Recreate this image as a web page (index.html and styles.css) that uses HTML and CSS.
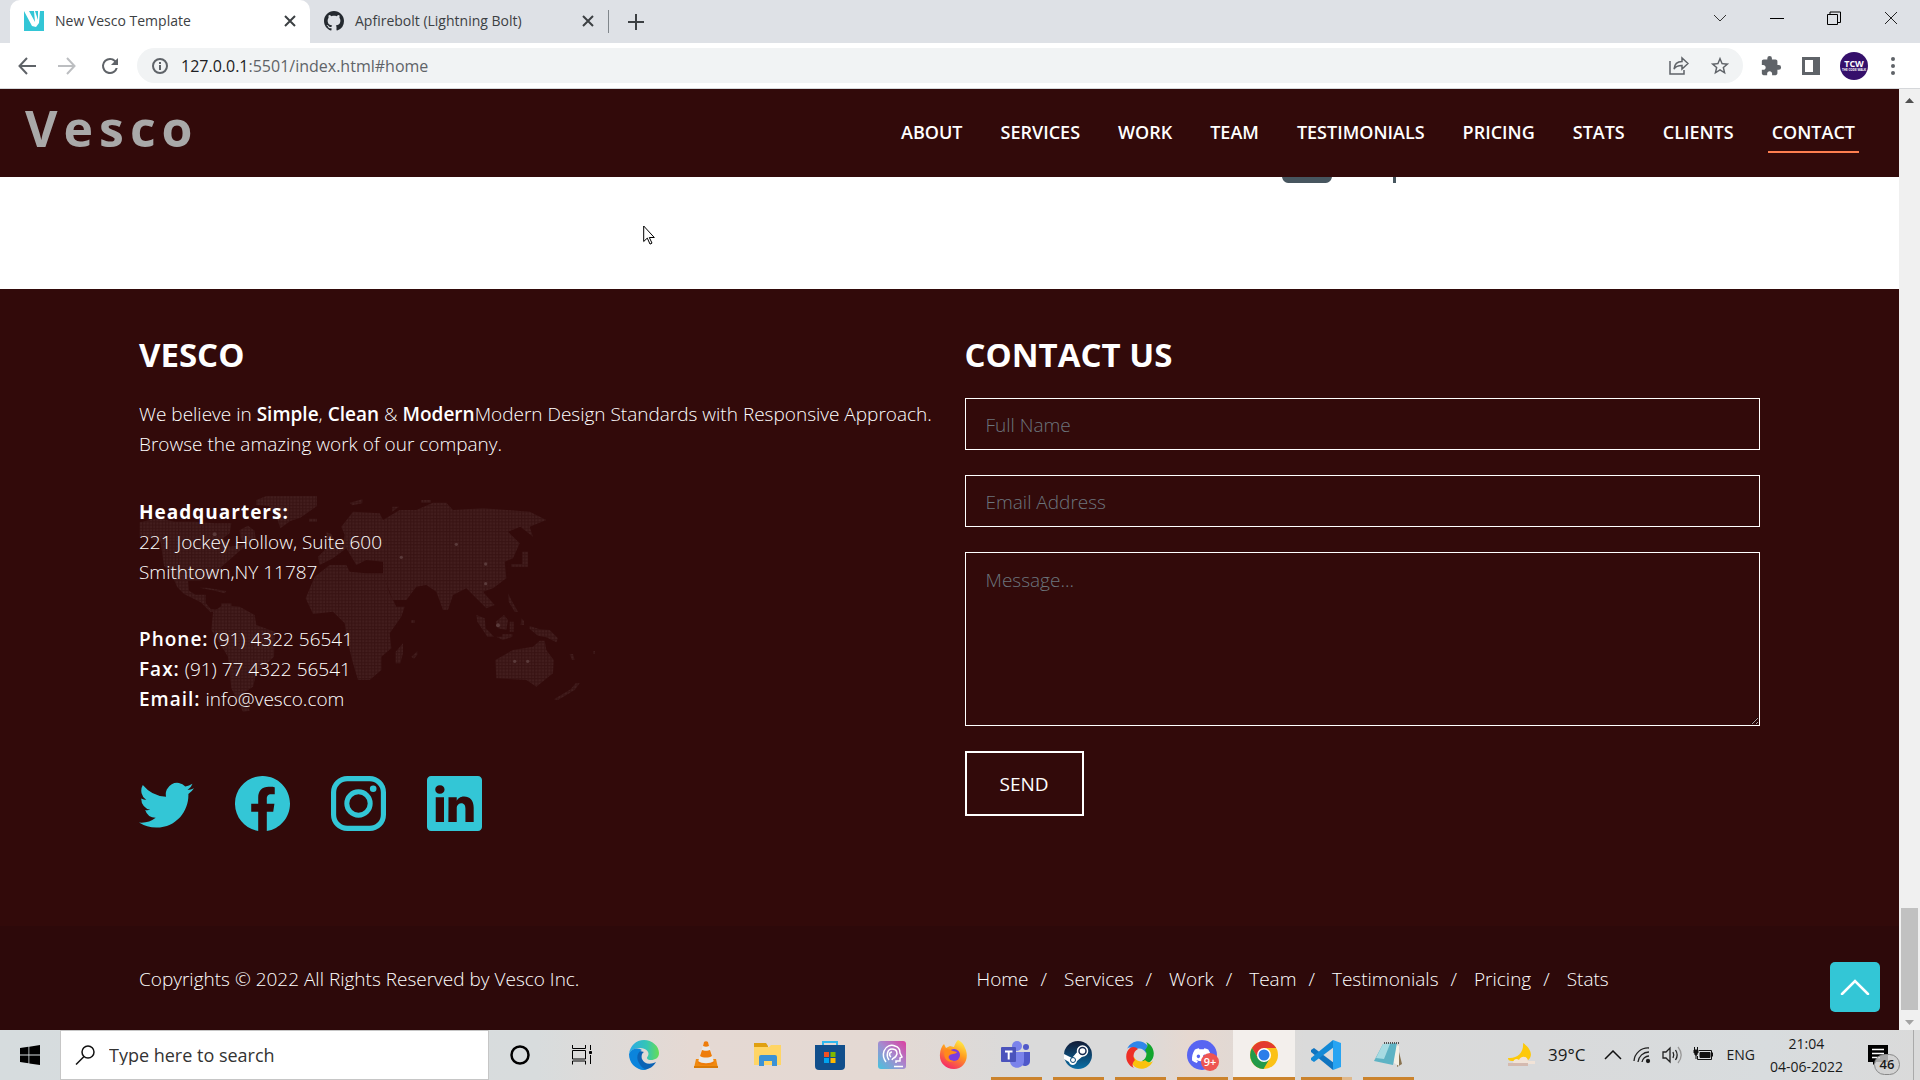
FILE: index.html
```html
<!DOCTYPE html>
<html lang="en">
<head>
<meta charset="utf-8">
<title>New Vesco Template</title>
<link rel="stylesheet" href="styles.css">
</head>
<body>
<div class="tabstrip">
  <div class="tab tab-active">
    <svg class="favicon" viewBox="0 0 20 20"><path fill="#33c6d6" d="M0 0h20v20H0z"/><path fill="#fff" d="M0 0h5l6 11L10 0h1l4 12-3 4-4-1zM14 0h2l-1 12-1 1z"/></svg>
    <span class="tab-title">New Vesco Template</span>
    <button class="icon-btn" aria-label="Close tab"><svg width="12" height="12" viewBox="0 0 12 12"><path d="M1 1l10 10M11 1L1 11" stroke="#3c4043" stroke-width="2"/></svg></button>
  </div>
  <div class="tab">
    <svg class="favicon" viewBox="0 0 16 16"><path fill="#24292f" d="M8 0C3.58 0 0 3.58 0 8c0 3.54 2.29 6.53 5.47 7.59.4.07.55-.17.55-.38 0-.19-.01-.82-.01-1.49-2.01.37-2.53-.49-2.69-.94-.09-.23-.48-.94-.82-1.13-.28-.15-.68-.52-.01-.53.63-.01 1.08.58 1.23.82.72 1.21 1.87.87 2.33.66.07-.52.28-.87.51-1.07-1.78-.2-3.64-.89-3.64-3.95 0-.87.31-1.59.82-2.15-.08-.2-.36-1.02.08-2.12 0 0 .67-.21 2.2.82.64-.18 1.32-.27 2-.27s1.36.09 2 .27c1.53-1.04 2.2-.82 2.2-.82.44 1.1.16 1.92.08 2.12.51.56.82 1.27.82 2.15 0 3.07-1.87 3.75-3.65 3.95.29.25.54.73.54 1.48 0 1.07-.01 1.93-.01 2.2 0 .21.15.46.55.38A8.01 8.01 0 0016 8c0-4.42-3.58-8-8-8z"/></svg>
    <span class="tab-title">Apfirebolt (Lightning Bolt)</span>
    <button class="icon-btn" aria-label="Close tab"><svg width="12" height="12" viewBox="0 0 12 12"><path d="M1 1l10 10M11 1L1 11" stroke="#3c4043" stroke-width="2"/></svg></button>
  </div>
  <button class="icon-btn new-tab" aria-label="New tab"><svg width="16" height="16" viewBox="0 0 16 16"><path d="M8 0v16M0 8h16" stroke="#3c4043" stroke-width="2"/></svg></button>
  <div class="window-controls">
    <button class="icon-btn" aria-label="Search tabs"><svg width="14" height="14" viewBox="0 0 14 14"><path d="M1 4l6 6 6-6" fill="none" stroke="#333"/></svg></button>
    <button class="icon-btn" aria-label="Minimize"><svg width="14" height="14" viewBox="0 0 14 14"><path d="M0 7.500h14" stroke="#000"/></svg></button>
    <button class="icon-btn" aria-label="Restore"><svg width="14" height="14" viewBox="0 0 14 14"><path d="M.5 3.500h10v10H.5zM3 3V1h10.500v10.500H11" fill="none" stroke="#000"/></svg></button>
    <button class="icon-btn" aria-label="Close"><svg width="14" height="14" viewBox="0 0 14 14"><path d="M1 1l12 12M13 1L1 13" stroke="#222"/></svg></button>
  </div>
</div>

<div class="toolbar">
  <button class="icon-btn" aria-label="Back"><svg width="18" height="18" viewBox="0 0 18 18"><path d="M18 9H2M9 1L1.500 9 9 17" fill="none" stroke="#5f6368" stroke-width="2"/></svg></button>
  <button class="icon-btn" aria-label="Forward"><svg width="18" height="18" viewBox="0 0 18 18"><path d="M0 9h16M9 1l7.500 8L9 17" fill="none" stroke="#bcbec1" stroke-width="2"/></svg></button>
  <button class="icon-btn" aria-label="Reload"><svg width="24" height="24" viewBox="0 0 24 24"><path fill="#5f6368" d="M17.650 6.350A7.958 7.958 0 0 0 12 4a8 8 0 1 0 7.730 10h-2.080A6 6 0 1 1 12 6c1.660 0 3.140.690 4.220 1.780L13 11h7V4l-2.350 2.350z"/></svg></button>
  <div class="omnibox">
    <svg width="18" height="18" viewBox="0 0 18 18"><circle cx="9" cy="9" r="7" fill="none" stroke="#5f6368" stroke-width="2"/><path d="M9 8v5M9 5v2" stroke="#5f6368" stroke-width="2"/></svg>
    <span class="url"><b>127.0.0.1</b>:5501/index.html#home</span>
    <button class="icon-btn" aria-label="Share"><svg width="20" height="20" viewBox="0 0 20 20" fill="none" stroke="#5f6368" stroke-width="1.500"><path d="M1 5v13h14v-4M5 13c.5-5 3-7.500 8-7.500V2l6 5.500-6 5.500V9.500c-4 0-6.500 1-8 3.500z"/></svg></button>
    <button class="icon-btn" aria-label="Bookmark"><svg width="22" height="22" viewBox="0 0 24 24"><path fill="#5f6368" d="M22 9.240l-7.190-.62L12 2 9.190 8.630 2 9.240l5.460 4.730L5.820 21 12 17.270 18.180 21l-1.630-7.030L22 9.240zM12 15.400l-3.760 2.270 1-4.280-3.320-2.880 4.380-.38L12 6.100l1.710 4.040 4.380.38-3.320 2.880 1 4.280L12 15.400z"/></svg></button>
  </div>
  <div class="toolbar-end">
    <button class="icon-btn" aria-label="Extensions"><svg width="22" height="22" viewBox="0 0 24 24"><path fill="#5f6368" d="M20.500 11H19V7c0-1.100-.9-2-2-2h-4V3.500a2.500 2.500 0 0 0-5 0V5H4c-1.100 0-2 .9-2 2v3.800h1.500c1.500 0 2.700 1.200 2.700 2.700S5 16.200 3.500 16.200H2V20c0 1.100.9 2 2 2h3.800v-1.500c0-1.500 1.200-2.700 2.700-2.700s2.700 1.200 2.700 2.700V22H17c1.100 0 2-.9 2-2v-4h1.500a2.500 2.500 0 0 0 0-5z"/></svg></button>
    <button class="icon-btn" aria-label="Side panel"><svg width="18" height="18" viewBox="0 0 18 18"><path fill="#5f6368" fill-rule="evenodd" d="M0 0h18v18H0zM3 3v12h8V3z"/></svg></button>
    <span class="avatar">TCW<small>THE CODE WALK</small></span>
    <button class="icon-btn" aria-label="Menu"><svg width="6" height="18" viewBox="0 0 6 18" fill="#5f6368"><circle cx="3" cy="2" r="2"/><circle cx="3" cy="9" r="2"/><circle cx="3" cy="16" r="2"/></svg></button>
  </div>
</div>

<div class="viewport">
  <div class="page">
    <header class="site-header">
      <a class="logo" href="#home">Vesco</a>
      <nav class="main-nav">
        <a href="#about">ABOUT</a><a href="#services">SERVICES</a><a href="#work">WORK</a><a href="#team">TEAM</a><a href="#testimonials">TESTIMONIALS</a><a href="#pricing">PRICING</a><a href="#stats">STATS</a><a href="#clients">CLIENTS</a><a class="current" href="#contact">CONTACT</a>
      </nav>
    </header>
    <section class="clients">
      <svg width="115" height="7" viewBox="0 0 115 7" fill="#47565f"><path d="M0 0h50c-1 4-3 6-8 6H8C3 6 1 4 0 0zM111 0h3v6h-3z"/></svg>
    </section>
    <footer class="site-footer">
      <div class="columns">
        <div class="about">
          <h2>VESCO</h2>
          <p>We believe in <b>Simple</b>, <b>Clean</b> &amp; <b>Modern</b>Modern Design Standards with Responsive Approach. Browse the amazing work of our company.</p>
          <div class="address">
            <svg class="map" viewBox="118 555 1380 660" aria-hidden="true">
              <defs><pattern id="dots" x="120" y="558" width="9.800" height="9.800" patternUnits="userSpaceOnUse"><rect width="9.800" height="9.800" fill="#381313"/><rect x="1" y="1" width="6.500" height="6.500" fill="#431e1e"/></pattern></defs>
              <g fill="url(#dots)">
                <path d="M120 637l55-12 50 10h60l60 5h50l-5 30-20 15 20 25 40-5 20-10-10 10-45 40-30 25-15 30-50 12h-35l3 30 20 12 30 0 0 25 15 18 25 2-25 8-30-30-50-25-20-20-20-45-20-20-10-70-60-20-3 5zM420 660l25-13 20 15 3 25-28 18-18-20zM300 833h20l60 10-5 7-30-8zM365 880h30v8h-30z"/>
                <path d="M470 570l30-12 152 0v30l-50 35-30 10-30 22-15-45-20-22-37-3zM628 626h24v9h-24zM750 578l38-10v12l-30 6zM878 590l20 0-20 15zM965 570l28 0v8h-28z"/>
                <path d="M340 905l30-20 50 5 45 25 5 30 55 20-2 75-53 50-10 40-30 20 20 52-20 3-35-70-10-95-50-80z"/>
                <path d="M645 800l45-35h50l10 20 50 5 50 0 20 60 20 40h25l-10 30-35 50 5 45-30 25v40l-35 30h-35l-15-50-15-60-10-60-35-35-60 7-22-47zM888 1060v-35l22-25v30l-8 30zM935 1040l18-16v10l-10 12zM935 930h10v9h-10z"/>
                <path d="M725 650l35-45 80 5 10 20 50-30h50l50-22h40l20 22 90-5 140 10 50 25-50 20 10 30-38-30-37 15 35 35-20 45-25 10 5 50-40 30-30 10 35 40-25 10-30-30-30-30-40 20-15 45h-15l-20-55-30-20-30 5-30 40h-40l-30-75v-40l-50-5-30 15-30-50-40 30-40 20-5-25 45-45 30 10 5-30zM680 667l15 5 10 22-22-6zM1268 725h17v45h-50v-8h33zM1225 850l10 20 20 35h-10l-18-30zM1265 925l8 8v12h-10z"/>
                <path d="M1130 915l25 10 3 30 25 25h-20l-30-45zM1188 935l25-20 12 15-5 30-25-5zM1190 980h18v-7h30v7l-28 10zM1230 935h12v30h-12zM1290 948l30 10 30 2 25 25-5 12-30-15-25-5-25-20zM1187 1050l53-30 60-10 20-18h15l5 28 22 30-2 40-50 40-30-20-90-5zM1410 1032h10l5 18h-8zM1480 1023h6v8h-6zM1428 1120h12l-15 20-50 30-12-2 50-30z"/>
              </g>
              <g fill="#5a3a3a"><circle cx="345" cy="673" r="6"/><circle cx="1070" cy="703" r="5"/><circle cx="905" cy="742" r="5"/><circle cx="1158" cy="762" r="5"/><circle cx="1158" cy="821" r="5"/><circle cx="1195" cy="946" r="6"/><circle cx="1245" cy="1054" r="5"/><circle cx="1284" cy="1054" r="5"/></g>
            </svg>
            <p><strong class="spaced">Headquarters:</strong><br>221 Jockey Hollow, Suite 600<br>Smithtown,NY 11787</p>
            <p><b class="spaced">Phone:</b> (91) 4322 56541<br><b class="spaced">Fax:</b> (91) 77 4322 56541<br><b class="spaced">Email:</b> info@vesco.com</p>
          </div>
          <div class="social">
            <a href="#twitter" aria-label="Twitter"><svg viewBox="0 0 16 16"><path d="M5.026 15c6.038 0 9.341-5.003 9.341-9.334 0-.14 0-.282-.006-.422A6.685 6.685 0 0 0 16 3.542a6.658 6.658 0 0 1-1.889.518 3.301 3.301 0 0 0 1.447-1.817 6.533 6.533 0 0 1-2.087.793A3.286 3.286 0 0 0 7.875 6.030a9.325 9.325 0 0 1-6.767-3.429 3.289 3.289 0 0 0 1.018 4.382A3.323 3.323 0 0 1 .64 6.575v.045a3.288 3.288 0 0 0 2.632 3.218 3.203 3.203 0 0 1-.865.115 3.230 3.230 0 0 1-.614-.057 3.283 3.283 0 0 0 3.067 2.277A6.588 6.588 0 0 1 .78 13.580a6.320 6.320 0 0 1-.78-.045A9.344 9.344 0 0 0 5.026 15z"/></svg></a>
            <a href="#facebook" aria-label="Facebook"><svg viewBox="0 0 16 16"><path d="M16 8.049c0-4.446-3.582-8.050-8-8.050C3.580 0-.002 3.603-.002 8.050c0 4.017 2.926 7.347 6.750 7.951v-5.625h-2.030V8.050H6.750V6.275c0-2.017 1.195-3.131 3.022-3.131.876 0 1.791.157 1.791.157v1.980h-1.009c-.993 0-1.303.621-1.303 1.258v1.510h2.218l-.354 2.326H9.250V16c3.824-.604 6.750-3.934 6.750-7.951z"/></svg></a>
            <a href="#instagram" aria-label="Instagram"><svg viewBox="0 0 16 16"><rect x=".75" y=".75" width="14.500" height="14.500" rx="4" fill="none" stroke="#33c6d6" stroke-width="1.500"/><circle cx="8" cy="8" r="3.400" fill="none" stroke="#33c6d6" stroke-width="1.450"/><circle cx="12.270" cy="3.730" r=".96"/></svg></a>
            <a href="#linkedin" aria-label="LinkedIn"><svg viewBox="0 0 16 16"><path d="M0 1.146C0 .513.526 0 1.175 0h13.650C15.474 0 16 .513 16 1.146v13.708c0 .633-.526 1.146-1.175 1.146H1.175C.526 16 0 15.487 0 14.854V1.146zm4.943 12.248V6.169H2.542v7.225h2.401zm-1.200-8.212c.837 0 1.358-.554 1.358-1.248-.015-.709-.52-1.248-1.342-1.248-.822 0-1.359.54-1.359 1.248 0 .694.521 1.248 1.327 1.248h.016zm4.908 8.212V9.359c0-.216.016-.432.08-.586.173-.431.568-.878 1.232-.878.869 0 1.216.662 1.216 1.634v3.865h2.401V9.250c0-2.220-1.184-3.252-2.764-3.252-1.274 0-1.845.7-2.165 1.193v.025h-.016a5.540 5.540 0 0 1 .016-.025V6.169h-2.400c.03.678 0 7.225 0 7.225h2.400z"/></svg></a>
          </div>
        </div>
        <form class="contact">
          <h2>CONTACT US</h2>
          <input type="text" placeholder="Full Name" aria-label="Full Name">
          <input type="email" placeholder="Email Address" aria-label="Email Address">
          <textarea placeholder="Message..." aria-label="Message"></textarea>
          <button class="send" type="button">SEND</button>
        </form>
      </div>
      <div class="legal">
        <p>Copyrights © 2022 All Rights Reserved by Vesco Inc.</p>
        <nav class="foot-nav">
          <a href="#home">Home</a><a href="#services">Services</a><a href="#work">Work</a><a href="#team">Team</a><a href="#testimonials">Testimonials</a><a href="#pricing">Pricing</a><a href="#stats">Stats</a>
        </nav>
      </div>
    </footer>
    <a class="to-top" href="#home" aria-label="Back to top"><svg width="30" height="16" viewBox="0 0 30 16"><path d="M2 15L15 2l13 13" fill="none" stroke="#fff" stroke-width="2.500" stroke-linecap="round"/></svg></a>
  </div>
  <div class="scrollbar">
    <svg width="9" height="5" viewBox="0 0 9 5"><path fill="#505050" d="M0 5l4.500-5L9 5z"/></svg>
    <span class="thumb"></span>
    <svg width="9" height="5" viewBox="0 0 9 5"><path fill="#a3a3a3" d="M0 0l4.500 5L9 0z"/></svg>
  </div>
</div>

<div class="taskbar">
  <button class="start" aria-label="Start"><svg width="20" height="20" viewBox="0 0 20 20"><path d="M0 3l8.500-1.200v7.700H0zM9.300 1.700L20 0v9.500H9.300zM0 10.500h8.500v7.800L0 17zM9.300 10.500H20V20L9.300 18.400z"/></svg></button>
  <label class="search">
    <svg width="20" height="20" viewBox="0 0 20 20" fill="none" stroke="#111" stroke-width="1.500"><circle cx="13" cy="7" r="6"/><path d="M9 11.500L1 19.500"/></svg>
    <input type="text" placeholder="Type here to search" aria-label="Search">
  </label>
  <div class="apps">
    <button class="app" aria-label="Cortana"><svg width="20" height="20" viewBox="0 0 20 20"><circle cx="10" cy="10" r="8.500" fill="none" stroke="#000" stroke-width="2.500"/></svg></button>
    <button class="app" aria-label="Task view"><svg width="20" height="20" viewBox="0 0 20 20" fill="none" stroke="#000"><path d="M.5 0v3.500h13V0M.5 19.500v-3.500h13v3.500M.5 5.500h13v8.500H.5zM18.500 0v5M18.500 10v9"/><path fill="#000" d="M17.500 6.500h2v2h-2z"/></svg></button>
    <button class="app" aria-label="Edge"><svg viewBox="0 0 30 30"><defs><linearGradient id="eg" x1="0" x2="1"><stop offset="0" stop-color="#2aa9e8"/><stop offset=".6" stop-color="#36c6b4"/><stop offset="1" stop-color="#66dd55"/></linearGradient></defs><path fill="#0c63b5" d="M27 22c-6 3-12 2-14-3-1-3 0-6 2-7l-8-2C2 14 1 24 9 28c7 4 15 0 18-6z"/><path fill="url(#eg)" d="M0 14C1 6 7 0 15 0s15 6 15 13c0 5-4 7-8 7-4 0-5-2-3-4 2-4-2-8-8-8C6 8 2 10 0 14z"/><path fill="#0b84dc" d="M0 14c2-5 8-7 13-4-5 2-6 8-3 13 2 4 5 6 8 7-10 1-18-6-18-16z"/></svg></button>
    <button class="app" aria-label="VLC"><svg viewBox="0 0 30 30"><path fill="#f08a10" d="M5 19h20l2 9H3z"/><path fill="#d97a06" d="M3 26h24v2H3z"/><path fill="#e9e9e9" d="M13 2h4l6 20c-3 3-13 3-16 0z"/><path fill="#ee7d0b" d="M13 2c1-1 3-1 4 0l1 4c-2 1-4 1-6 0zM11 10c2 1 6 1 8 0l2 6c-3 2-9 2-12 0zM7 21c4 3 12 3 16 0v2c-3 3-13 3-16 0z"/></svg></button>
    <button class="app" aria-label="File Explorer"><svg viewBox="0 0 30 30"><path fill="#e0a010" d="M1 3h12l2 3v5H1z"/><path fill="#ffd565" d="M1 7h15l2-2h10v20H1z"/><path fill="#3b92d6" d="M6 26V17q0-2 2-2h14q2 0 2 2v9h-5v-5h-8v5z"/></svg></button>
    <button class="app" aria-label="Microsoft Store"><svg viewBox="0 0 30 30"><path fill="none" stroke="#31b8ee" stroke-width="2" d="M8 6V2h14v4"/><path fill="#114f8c" d="M0 5h30v21q0 4-4 4H4q-4 0-4-4z"/><path fill="#f25022" d="M9 12h5v5H9z"/><path fill="#7fba00" d="M15.500 12h5v5h-5z"/><path fill="#00a4ef" d="M9 18h5v5H9z"/><path fill="#ffb900" d="M15.500 18h5v5h-5z"/></svg></button>
    <button class="app" aria-label="Media app"><svg viewBox="0 0 30 30"><defs><linearGradient id="mg" x1="0" y1="1" x2="1" y2="0"><stop offset="0" stop-color="#45c4de"/><stop offset=".5" stop-color="#a58bd0"/><stop offset="1" stop-color="#dc3fa0"/></linearGradient></defs><rect x="1" y="1" width="28" height="28" rx="3" fill="url(#mg)"/><path fill="none" stroke="#fff" stroke-width="1.500" d="M9 22c-3-4-3-8-2-11 2-5 7-7 11-5 4 1 5 4 5 7l2 4-2 1v3h-4v2M12 20c-3-4-2-11 3-11s6 4 4 7-3 1-4 4M15 12c-3 0-3 4-1 5"/><path stroke="#fff" stroke-width="1.500" d="M17 26.500h9"/></svg></button>
    <button class="app" aria-label="Firefox"><svg viewBox="0 0 30 30"><defs><linearGradient id="fg" x1=".8" y1="0" x2=".3" y2="1"><stop offset="0" stop-color="#fff04a"/><stop offset=".45" stop-color="#ff9a1f"/><stop offset="1" stop-color="#f5246a"/></linearGradient></defs><path fill="url(#fg)" d="M19 0c5 3 6 5 7 8 5 10-1 21-11 21C6 29 0 22 1 14c0-4 2-8 4-10l2 4 4-2 4 1c1-3 2-5 4-7z"/><circle cx="15" cy="15" r="6" fill="#7a3be0"/><path fill="#ff8a1c" d="M6 10c3-2 6 0 8 1l4 1c-2 3-6 1-8 4-2 2 1 5 5 5-6 3-12-3-9-11z"/></svg></button>
    <button class="app open" aria-label="Teams"><svg viewBox="0 0 30 30"><circle cx="16" cy="6" r="5" fill="#7b83eb"/><circle cx="25" cy="7" r="3" fill="#5059c9"/><path fill="#5059c9" d="M20 12h9v9a5 5 0 0 1-9 3z"/><path fill="#7b83eb" d="M9 12h14v9c0 9-14 9-14 0z"/><rect y="7" width="15" height="15" rx="1" fill="#4b53bc"/><path stroke="#fff" stroke-width="2" d="M4 11.500h7.500M7.700 11.500v8"/></svg></button>
    <button class="app open" aria-label="Steam"><svg viewBox="0 0 30 30"><defs><linearGradient id="sg" x2="0" y2="1"><stop stop-color="#111a35"/><stop offset="1" stop-color="#0a6fa6"/></linearGradient></defs><circle cx="15" cy="15" r="14" fill="url(#sg)"/><path fill="#fff" d="M1 14l8 4 6-7h4l1 5-6 5c-1 5-7 5-8 1l-5-3z"/><circle cx="19.500" cy="11" r="5" fill="#172b50" stroke="#fff" stroke-width="1.500"/><circle cx="19.500" cy="11" r="2.800" fill="#fff"/><circle cx="10" cy="20" r="2.500" fill="none" stroke="#0c4978"/></svg></button>
    <button class="app open" aria-label="ShareX"><svg viewBox="0 0 30 30"><path fill="#2f86ea" d="M2 9C6 0 17-1 22 5c2 3 1 6-1 8-2-4-7-6-11-3C7 7 4 7 2 9z"/><path fill="#12a52e" d="M21 2c9 4 10 15 4 20-3 2-6 1-8-1 4-2 6-7 3-11 3-3 3-6 1-8z"/><path fill="#fbc20c" d="M28 21c-4 9-15 10-20 4-2-3-1-6 1-8 2 4 7 6 11 3 3 3 6 3 8 1z"/><path fill="#ee2f26" d="M9 28C0 24-1 13 5 8c3-2 6-1 8 1-4 2-6 7-3 11-3 3-3 6-1 8z"/></svg></button>
    <button class="app open" aria-label="Discord"><svg viewBox="0 0 30 30"><circle cx="15" cy="15" r="15" fill="#5865f2"/><path fill="#fff" transform="translate(5 6) scale(1.200)" d="M13.545 2.907a13.227 13.227 0 0 0-3.257-1.011.05.05 0 0 0-.052.025c-.141.25-.297.577-.406.833a12.190 12.190 0 0 0-3.658 0 8.258 8.258 0 0 0-.412-.833.051.051 0 0 0-.052-.025c-1.125.194-2.220.534-3.257 1.011C.356 6.024-.213 9.047.066 12.032a13.276 13.276 0 0 0 4.016 2.057c.328-.43.620-.88.874-1.348a8.875 8.875 0 0 1-1.276-.606l.264-.280c2.619 1.196 5.505 1.196 8.092 0l.3.280a8.254 8.254 0 0 1-1.249.594c.24.465.515.940.847 1.370a13.235 13.235 0 0 0 4.001-2.020c.334-3.451-.559-6.449-2.390-9.172zm-8.198 7.307c-.789 0-1.438-.724-1.438-1.612 0-.889.637-1.613 1.438-1.613.807 0 1.450.73 1.438 1.613 0 .888-.637 1.612-1.438 1.612zm5.316 0c-.788 0-1.438-.724-1.438-1.612 0-.889.637-1.613 1.438-1.613.807 0 1.451.73 1.438 1.613 0 .888-.631 1.612-1.438 1.612z"/></svg><span class="count">9+</span></button>
    <button class="app open focused" aria-label="Chrome"><svg viewBox="0 0 30 30"><circle cx="15" cy="15" r="14" fill="#fbc116"/><path fill="#e33b2e" d="M3 8a14 14 0 0 1 24.200 0H15l-6 10z"/><path fill="#229a4a" d="M3 8a14 14 0 0 0 11.500 21L21 18 9 18z"/><circle cx="15" cy="15" r="7" fill="#fff"/><circle cx="15" cy="15" r="5.500" fill="#2a7de9"/></svg></button>
    <button class="app open stacked" aria-label="Visual Studio Code"><svg viewBox="0 0 30 30"><path fill="#0f74c0" d="M0 10l3-2 20 15-1 7L0 12z"/><path fill="#1389d6" d="M0 20l3 2L23 7l-1-7L0 18z"/><path fill="#28a4f2" d="M22 0l8 3v24l-8 3z"/></svg></button>
    <button class="app open" aria-label="Notepad"><svg viewBox="0 0 30 30"><path fill="#8a7350" d="M24 4l5 20-5 3z"/><path fill="#f3efe4" d="M22 4l4 2v20l-5-3z"/><path fill="#5eb3c4" d="M10 4l14-1-4 22L1 21z"/><path fill="#a7dbe2" d="M10 4l7 0-6 15-8-1z"/><path stroke="#555" stroke-width="2" stroke-dasharray="1 1" d="M11 3h15"/></svg></button>
  </div>
  <div class="tray">
    <svg width="30" height="26" viewBox="0 0 30 26"><path fill="#fdc90a" d="M16 1c8 5 11 14 4 18H5c-3 0-4-1-4-3 9 1 16-5 15-15z"/><path fill="#f1e3d7" d="M6 21c0-4 4-5 6-3 2-5 9-4 9 1h7v3H6z"/><path fill="#d4bab0" d="M1 21h20v3H1z"/></svg>
    <span class="temp">39°C</span>
    <svg width="18" height="10" viewBox="0 0 18 10"><path d="M1 9l8-8 8 8" fill="none" stroke="#111" stroke-width="1.500"/></svg>
    <svg width="18" height="18" viewBox="0 0 18 18" fill="none" stroke="#222" stroke-width="1.300"><path d="M1 15A14 14 0 0 1 16 2M5 16A11 11 0 0 1 16 6M9 16a7 7 0 0 1 7-6"/><circle cx="15" cy="15" r="1.500" fill="#111"/></svg>
    <svg width="20" height="18" viewBox="0 0 20 18" fill="none" stroke="#222" stroke-width="1.300"><path d="M1 6h3l4-4v14l-4-4H1zM11 6c1 2 1 4 0 6M13.500 4c2 3 2 7 0 10"/><path stroke="#999" d="M16 1c4 5 4 11 0 16"/></svg>
    <svg width="20" height="16" viewBox="0 0 20 16" fill="none" stroke="#111"><path d="M6 3.500h12.500v9H4.500V9"/><path fill="#111" d="M7 5.500h10v5H7zM19 6h1v3h-1zM1 3h4v3H4v2H2V6H1z"/><path d="M1.500 0v3M4.500 0v3M3 8v4"/></svg>
    <span class="lang">ENG</span>
    <time class="clock">21:04<br>04-06-2022</time>
    <button class="notes" aria-label="Notifications"><svg width="20" height="20" viewBox="0 0 20 20"><path d="M0 0h20v17H8l-3 3v-3H0z"/><path stroke="#fff" stroke-width="1.300" d="M4 4.500h12M4 8.500h12M4 12.500h8"/></svg><span class="count">46</span></button>
  </div>
</div>
<svg class="pointer" width="12" height="20" viewBox="0 0 12 20"><path d="M.7 1v15.500l3.600-3.400 2.700 6 2-1-2.700-5.600h5z" fill="#fff" stroke="#000"/></svg>
</body>
</html>
```
FILE: styles.css
```css
* { box-sizing: border-box; margin: 0; padding: 0; }
body {
  display: flex; flex-direction: column; min-height: 100vh;
  font: 400 15px/20px "Open Sans", sans-serif; color: #fff; background: #fff;
}
button, input, textarea { font: inherit; color: inherit; background: none; border: 0; }
a { color: inherit; text-decoration: none; }
svg { display: block; flex: none; }
.icon-btn { display: flex; align-items: center; justify-content: center; }

/* Browser chrome */
.tabstrip { display: flex; height: 43px; padding-left: 10px; background: #dee1e6; color: #3c4043; }
.tab { display: flex; align-items: center; width: 298px; padding: 0 14px 2px; gap: 11px; }
.tab-active { width: 300px; border-radius: 10px 10px 0 0; background: #fff; }
.favicon { width: 20px; height: 20px; }
.tab-title { flex: 1; font-size: 14px; white-space: nowrap; }
.new-tab { margin: 10px 0; padding-left: 19px; border-left: 1px solid #80868b; }
.window-controls { display: flex; margin-left: auto; padding: 0 22px 7px; gap: 43px; }
.toolbar { display: flex; align-items: center; gap: 22px; height: 46px; padding: 0 24px 0 18px; border-bottom: 1px solid #d5d7da; }
.omnibox { flex: 1; display: flex; align-items: center; gap: 20px; height: 35px; padding: 0 12px; margin: 0 -5px 0 -7px; border-radius: 18px; background: #f1f3f4; color: #5f6368; }
.omnibox > svg { margin: 0 -8px 0 2px; }
.url { flex: 1; font-size: 16px; }
.url b { font-weight: 400; color: #202124; }
.toolbar-end { display: flex; align-items: center; gap: 20px; }
.avatar { display: flex; flex-direction: column; align-items: center; justify-content: center; width: 28px; height: 28px; margin-right: 2px; border-radius: 50%; background: #35106b; color: #fff; font-size: 9px; line-height: 9px; font-weight: 700; }
.avatar small { font-size: 3px; line-height: 5px; white-space: nowrap; }

/* Page and its scrollbar */
.viewport { flex: 1; display: flex; }
.page { flex: 1; display: flex; flex-direction: column; position: relative; }
.scrollbar { display: flex; flex-direction: column; align-items: center; justify-content: space-between; width: 21px; padding: 9px 2px 5px; background: #f0f0f0; }
.thumb { width: 100%; height: 102px; margin: auto 0 10px; background: #c1c1c1; }

.site-header { display: flex; align-items: center; justify-content: space-between; height: 88px; padding: 0 40px 0 25px; background: #320a0a; }
.logo { font-size: 50px; line-height: 60px; font-weight: 700; letter-spacing: 6px; color: #a9a9a9; padding-bottom: 10px; }
.main-nav { display: flex; gap: 30px; font-size: 18px; line-height: 24px; font-weight: 600; }
.main-nav a { padding: 7px 4px; border-bottom: 2px solid transparent; }
.main-nav .current { border-color: #ff7f50; }
.clients { height: 112px; padding-left: 1282px; overflow: hidden; }

.site-footer { flex: 1; display: flex; flex-direction: column; background: #320a0a; font-size: 19px; line-height: 30px; font-weight: 300; }
.columns { flex: 1; display: grid; grid-template-columns: 1fr 1fr; gap: 30px; padding: 46px 139px 45px; }
.columns h2 { font-size: 33px; line-height: 40px; font-weight: 700; }
.site-footer b { font-weight: 600; }
.site-footer strong { font-weight: 700; }
.spaced { letter-spacing: 1px; }
.about { display: flex; flex-direction: column; }
.about > p { margin-top: 24px; }
.address { position: relative; display: flex; flex-direction: column; gap: 37px; margin-top: 38px; }
.address p { position: relative; }
.map { position: absolute; left: 0; top: -2px; width: 460px; height: 220px; }
.social { display: flex; gap: 41px; margin-top: 62px; }
.social svg { width: 55px; height: 55px; fill: #33c6d6; }
.contact { display: flex; flex-direction: column; align-items: stretch; gap: 25px; }
.contact h2 { margin-bottom: -2px; }
.contact input { height: 52px; padding: 2px 20px 0; border: 1px solid #fff; }
.contact textarea { height: 174px; padding: 12px 20px; border: 1px solid #fff; resize: both; }
.contact ::placeholder { color: #6c757d; opacity: 1; }
.send { align-self: flex-start; height: 65px; padding: 0 33px; border: 2px solid #fff; font-weight: 400; }
.legal { display: grid; grid-template-columns: 1fr 1fr; gap: 30px; padding: 38px 139px 36px; background: #2d090a; }
.foot-nav { display: flex; padding-left: 12px; }
.foot-nav a + a::before { content: "/"; padding: 0 17px 0 12px; }
.to-top { position: absolute; right: 19px; bottom: 18px; display: flex; align-items: center; justify-content: center; width: 50px; height: 50px; border-radius: 5px; background: #33c6d6; }

/* Taskbar */
.taskbar { display: flex; height: 50px; color: #1a1a1a; background: linear-gradient(90deg, #d6dcde 0, #d8dcdd 28%, #e5d9d3 36%, #e4d9d3 46%, #dadada 53%, #dadada 59%, #e6d8d0 62%, #dadada 68%, #d9dadb 80%, #d8dcde 92%, #dadada 100%); }
.start { width: 60px; padding-left: 20px; }
.search { display: flex; align-items: center; gap: 14px; width: 429px; padding: 0 14px; background: #fff; border: 1px solid #c6c6c6; }
.search input { flex: 1; font-size: 18px; outline: 0; }
.search ::placeholder { color: #333; opacity: 1; }
.apps { display: flex; }
.app { position: relative; display: flex; align-items: center; justify-content: center; width: 62px; height: 50px; }
.app svg[viewBox="0 0 30 30"] { width: 30px; height: 30px; }
.app.open::after { content: ""; position: absolute; left: 6px; right: 5px; bottom: 0; height: 3px; background: #cb832d; }
.app.focused { background: #f3efec; }
.app.focused::after { left: 0; right: 0; }
.app.stacked::after { background: linear-gradient(90deg, #cb832d 80%, #dfb88b 80%); }
.app .count { position: absolute; left: 30px; top: 23px; width: 18px; height: 18px; border-radius: 50%; background: #ee5552; color: #fff; font-size: 11px; line-height: 18px; font-weight: 600; text-align: center; }
.tray { display: flex; align-items: center; gap: 11px; margin-left: auto; padding-right: 6px; }
.temp { font-size: 17px; margin-right: 8px; }
.lang { font-size: 14px; margin-left: 2px; }
.clock { font-size: 14px; line-height: 23px; text-align: center; margin-left: 4px; }
.notes { position: relative; width: 46px; height: 50px; margin-left: 14px; border-right: 1px solid #aaa; }
.notes .count { position: absolute; left: 6px; top: 24px; width: 26px; height: 21px; border: 1px solid #888; border-radius: 11px; background: #d0d0d0cc; font-size: 13px; line-height: 19px; font-weight: 600; }
.pointer { position: absolute; left: 643px; top: 225px; }
```
